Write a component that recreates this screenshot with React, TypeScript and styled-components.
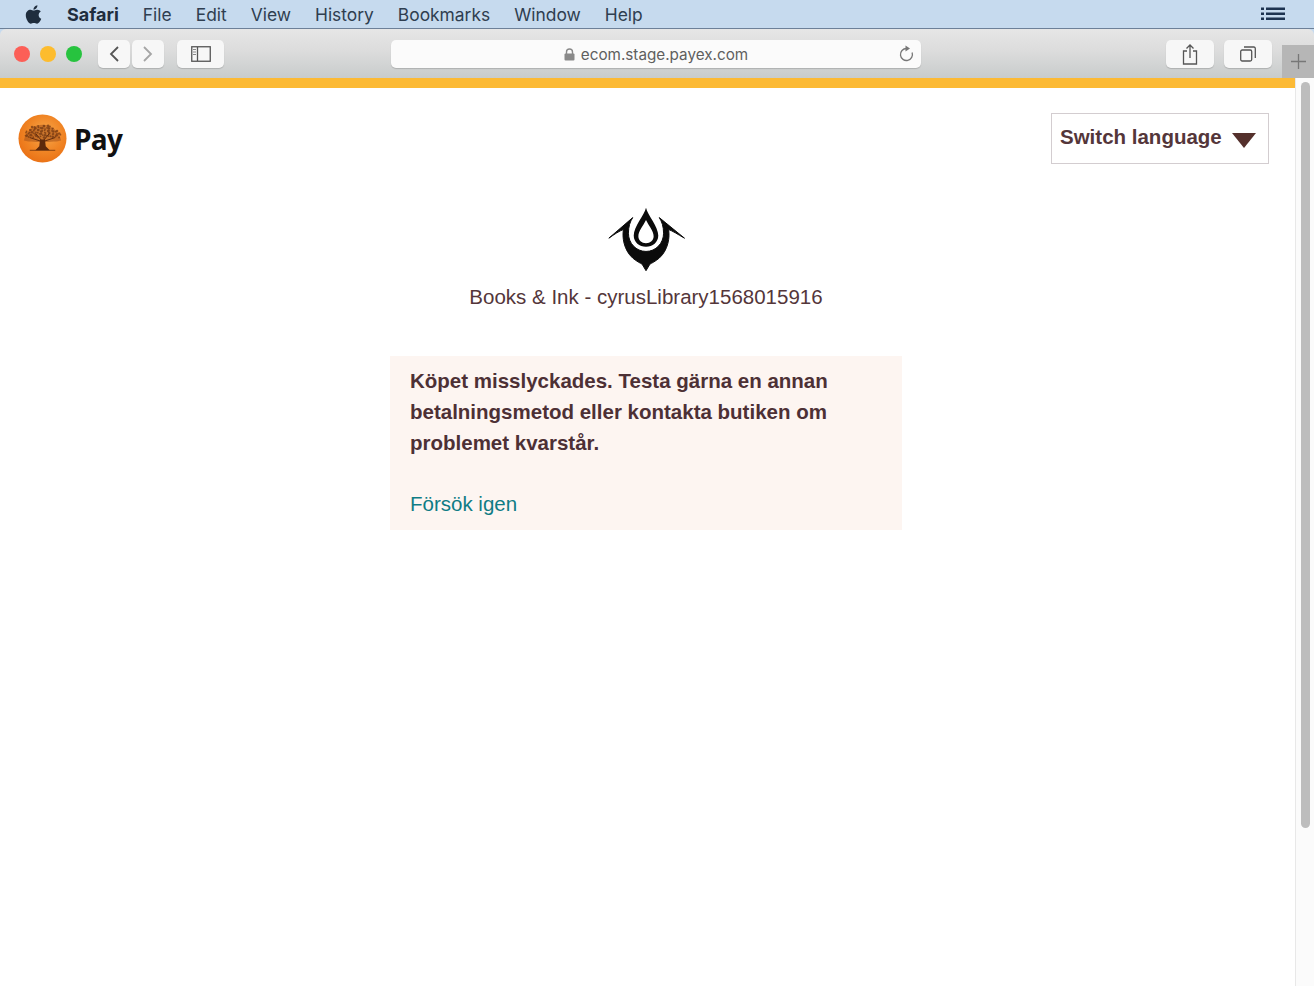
import * as React from 'react';
import styled, { createGlobalStyle } from 'styled-components';
import { FaApple } from 'react-icons/fa';

const GlobalStyle = createGlobalStyle`
  html, body {
    margin: 0;
    padding: 0;
    height: 100%;
    overflow: hidden;
    background: #fff;
  }
  #root {
    height: 100%;
  }
`;

const Screen = styled.div`
  display: flex;
  flex-direction: column;
  width: 1314px;
  height: 986px;
  background: #c6daee;
  overflow: hidden;
`;

const MenuBar = styled.div`
  display: flex;
  align-items: center;
  flex: 0 0 28px;
  padding: 0 29px 0 23px;
  font-family: Inter, "Liberation Sans", sans-serif;
  color: #2b3a4c;
  border-bottom: 1px solid #6d8098;
`;

const AppleMark = styled.span`
  display: flex;
  width: 21px;
  margin-right: 23px;
  font-size: 21px;
  color: #1f2d3d;
`;

const MenuItem = styled.span<{ $bold?: boolean }>`
  margin-right: 24px;
  font-size: ${(p) => (p.$bold ? '18px' : '17.4px')};
  font-weight: ${(p) => (p.$bold ? 700 : 400)};
  color: ${(p) => (p.$bold ? '#1f2d3d' : '#2f3e50')};
`;

const MenuEnd = styled.span`
  display: flex;
  margin-left: auto;
`;

const Toolbar = styled.div`
  display: flex;
  align-items: flex-start;
  flex: 0 0 49px;
  padding-left: 14px;
  background: linear-gradient(#e6e6e6, #dcdcdc 45%, #c8cccc);
  border-radius: 6px 6px 0 0;
`;

const Lights = styled.div`
  display: flex;
  gap: 10px;
  margin-top: 17px;
`;

const Light = styled.span<{ $color: string }>`
  width: 16px;
  height: 16px;
  border-radius: 50%;
  background: ${(p) => p.$color};
`;

const ToolButton = styled.div<{ $width: number; $left: number }>`
  display: flex;
  align-items: center;
  justify-content: center;
  width: ${(p) => p.$width}px;
  height: 28px;
  margin: 11px 0 0 ${(p) => p.$left}px;
  background: #f7f7f7;
  border-radius: 5px;
  box-shadow: 0 1px 1px rgba(0, 0, 0, 0.16);
`;

const UrlBar = styled.div`
  position: relative;
  display: flex;
  align-items: center;
  justify-content: center;
  gap: 6px;
  width: 530px;
  height: 28px;
  margin: 11px 0 0 167px;
  background: #fbfbfb;
  border-radius: 5px;
  box-shadow: 0 1px 1px rgba(0, 0, 0, 0.16);
  font-family: Inter, "Liberation Sans", sans-serif;
  font-size: 15.25px;
  color: #5f5f5f;
`;

const Reload = styled.svg`
  position: absolute;
  right: 6px;
  top: 5px;
`;

const NewTab = styled.div`
  display: flex;
  align-items: center;
  justify-content: center;
  align-self: flex-end;
  width: 32px;
  height: 33px;
  margin-left: 10px;
  background: #b6b6b6;
`;

const Body = styled.div`
  display: flex;
  flex: 1;
  min-height: 0;
  background: #fff;
`;

const Page = styled.main`
  flex: 1;
  display: flex;
  flex-direction: column;
  font-family: "Liberation Sans", Arial, sans-serif;
  color: #54363a;
`;

const AccentBar = styled.div`
  flex: 0 0 10px;
  background: #fcba35;
`;

const Header = styled.header`
  display: flex;
  justify-content: space-between;
  align-items: flex-start;
  padding: 25px 26px 0 18px;
`;

const Brand = styled.div`
  display: flex;
  align-items: center;
  gap: 7px;
  height: 49px;
  margin-top: 1px;
`;

const BrandName = styled.span`
  font-family: "Open Sans", "Noto Sans", sans-serif;
  font-size: 28px;
  font-weight: 700;
  color: #111;
  letter-spacing: -0.8px;
`;

const LanguageButton = styled.button`
  display: flex;
  align-items: center;
  justify-content: space-between;
  box-sizing: border-box;
  width: 218px;
  height: 51px;
  padding: 0 12px 4px 8px;
  background: #fff;
  border: 1px solid #d3cdd0;
  font-family: "Liberation Sans", Arial, sans-serif;
  font-size: 20.5px;
  font-weight: 700;
  color: #54363a;
`;

const Caret = styled.span`
  width: 0;
  height: 0;
  margin-top: 8px;
  border-left: 12px solid transparent;
  border-right: 12px solid transparent;
  border-top: 15px solid #54302c;
`;

const Content = styled.div`
  display: flex;
  flex-direction: column;
  align-items: center;
  padding-right: 3px;
`;

const StoreLogo = styled.svg`
  margin-top: 41px;
`;

const StoreName = styled.div`
  margin-top: 11px;
  font-size: 20.5px;
  line-height: 26px;
`;

const Alert = styled.section`
  box-sizing: border-box;
  width: 512px;
  height: 174px;
  margin-top: 46px;
  padding: 9px 20px;
  background: #fdf5f1;
`;

const AlertText = styled.p`
  margin: 0 0 30px;
  font-size: 20.5px;
  font-weight: 700;
  line-height: 31px;
  color: #4d3035;
`;

const RetryLink = styled.a`
  font-size: 20.5px;
  line-height: 31px;
  color: #0f7c85;
`;

const ScrollTrack = styled.div`
  flex: 0 0 19px;
  box-sizing: border-box;
  padding: 4px 4px 0 5px;
  background: #fbfbfb;
  border-left: 1px solid #e8e8e8;
`;

const ScrollThumb = styled.div`
  height: 746px;
  background: #bdbdbd;
  border-radius: 5px;
`;

// leaves of the tree, scattered over the dome of the canopy
const leaves = Array.from({ length: 70 }, (_, i) => {
  const angle = i * 2.399;
  const radius = Math.sqrt((i + 0.5) / 70);
  return {
    x: 25 + Math.cos(angle) * radius * 19,
    y: 24 + Math.abs(Math.sin(angle)) * radius * -13,
  };
});

const SwedbankLogo = () => (
  <svg width="49" height="49" viewBox="0 0 50 50" aria-hidden="true">
    <defs>
      <radialGradient id="sun" cx="55%" cy="40%" r="65%">
        <stop offset="0%" stopColor="#f8a94c" />
        <stop offset="60%" stopColor="#f08424" />
        <stop offset="100%" stopColor="#e96f14" />
      </radialGradient>
    </defs>
    <circle cx="25" cy="25" r="24.5" fill="url(#sun)" />
    <path d="M6 27C8 17 16 11 25 11s17 6 19 16c-6 2-32 2-38 0Z" fill="#a9551a" opacity="0.6" />
    <g fill="#6e3410" opacity="0.7">
      {leaves.map((l, i) => (
        <circle key={i} cx={l.x} cy={l.y} r={i % 3 === 0 ? 1.300 : 0.900} />
      ))}
    </g>
    <g fill="#5e2a0c">
      <path d="M22.500 26h5l.8 7 4 4H17.700l4-4z" />
      <path d="M24 28 12 24M26 28l12-4M24 27l-6-7M26 27l6-7" stroke="#5e2a0c" strokeWidth="1" />
      <path d="M12 36.500h26v1.200H12z" opacity="0.6" />
    </g>
  </svg>
);

const App = () => {
  const menu = ['File', 'Edit', 'View', 'History', 'Bookmarks', 'Window', 'Help'];

  return (
    <Screen>
      <GlobalStyle />
      <MenuBar>
        <AppleMark>
          <FaApple />
        </AppleMark>
        <MenuItem $bold>Safari</MenuItem>
        {menu.map((m) => (
          <MenuItem key={m}>{m}</MenuItem>
        ))}
        <MenuEnd>
          <svg width="24" height="14" viewBox="0 0 24 14" aria-hidden="true">
            <g fill="#1d3350">
              <rect x="0" y="0.5" width="3" height="2.500" />
              <rect x="0" y="5.500" width="3" height="2.500" />
              <rect x="0" y="10.500" width="3" height="2.500" />
              <rect x="5" y="0.500" width="19" height="2.500" />
              <rect x="5" y="5.500" width="19" height="2.500" />
              <rect x="5" y="10.500" width="19" height="2.500" />
            </g>
          </svg>
        </MenuEnd>
      </MenuBar>

      <Toolbar>
        <Lights>
          <Light $color="#fc5f57" />
          <Light $color="#fdbc2e" />
          <Light $color="#27c33f" />
        </Lights>
        <ToolButton $width={32} $left={16}>
          <svg width="12" height="18" viewBox="0 0 12 18" aria-hidden="true">
            <path d="M10 2 3 9l7 7" fill="none" stroke="#555" strokeWidth="1.8" />
          </svg>
        </ToolButton>
        <ToolButton $width={32} $left={2}>
          <svg width="12" height="18" viewBox="0 0 12 18" aria-hidden="true">
            <path d="m2 2 7 7-7 7" fill="none" stroke="#a5a5a5" strokeWidth="1.8" />
          </svg>
        </ToolButton>
        <ToolButton $width={47} $left={13}>
          <svg width="20" height="16" viewBox="0 0 20 16" aria-hidden="true">
            <rect x="0.75" y="0.75" width="18.5" height="14.5" fill="none" stroke="#555" strokeWidth="1.3" />
            <path d="M6.5 1v14" stroke="#555" strokeWidth="1.3" />
            <path d="M2 3.5h3M2 6h3M2 8.5h3" stroke="#888" strokeWidth="1" />
          </svg>
        </ToolButton>
        <UrlBar>
          <svg width="11" height="13" viewBox="0 0 11 13" aria-hidden="true">
            <path d="M2.5 6V4a3 3 0 0 1 6 0v2" fill="none" stroke="#8a8a8a" strokeWidth="1.4" />
            <rect x="0.5" y="5.5" width="10" height="7" rx="1" fill="#8a8a8a" />
          </svg>
          ecom.stage.payex.com
          <Reload width="18" height="18" viewBox="0 0 18 18" aria-hidden="true">
            <path d="M9.5 3.5a6 6 0 1 0 5.6 4" fill="none" stroke="#777" strokeWidth="1.3" />
            <path d="M8.5 0.5 13 3.5 8.5 6.5z" fill="#777" />
          </Reload>
        </UrlBar>
        <ToolButton $width={48} $left={245}>
          <svg width="16" height="21" viewBox="0 0 16 21" aria-hidden="true">
            <path d="M5 7H1.500v13h13V7H11M8 14V1.500M4.500 4.500 8 1l3.500 3.500" fill="none" stroke="#555" strokeWidth="1.3" />
          </svg>
        </ToolButton>
        <ToolButton $width={48} $left={10}>
          <svg width="16" height="16" viewBox="0 0 16 16" aria-hidden="true">
            <rect x="0.7" y="4" width="11" height="11" rx="1.5" fill="none" stroke="#555" strokeWidth="1.3" />
            <path d="M4 1h10a1.500 1.500 0 0 1 1.300 1.500V12" fill="none" stroke="#555" strokeWidth="1.3" />
          </svg>
        </ToolButton>
        <NewTab>
          <svg width="15" height="15" viewBox="0 0 15 15" aria-hidden="true">
            <path d="M7.500 0v15M0 7.500h15" stroke="#777" strokeWidth="1.300" />
          </svg>
        </NewTab>
      </Toolbar>

      <Body>
        <Page>
          <AccentBar />
          <Header>
            <Brand>
              <SwedbankLogo />
              <BrandName>Pay</BrandName>
            </Brand>
            <LanguageButton>
              Switch language
              <Caret />
            </LanguageButton>
          </Header>

          <Content>
            <StoreLogo width="80" height="68" viewBox="80 30 240 205" aria-hidden="true">
              <path
                fill="#0b0b0b"
                fillRule="evenodd"
                d="M200 38C205 60 237 95 237 122C237 142 220 156 200 156C180 156 163 142 163 122C163 95 195 60 200 38ZM200 75C192 92 177 108 177 124C177 136 187 145 200 145C213 145 223 136 223 124C223 108 208 92 200 75Z"
              />
              <path
                fill="#0b0b0b"
                stroke="#0b0b0b"
                strokeWidth="3"
                strokeLinejoin="round"
                d="M88 130L160 68C152 80 147 95 147 115C147 145 170 170 200 170C230 170 253 145 253 115C253 95 248 80 240 68L316 130C295 118 280 108 268 104C272 125 268 165 240 190C228 200 218 205 212 208L200 228L188 208C182 205 172 200 160 190C132 165 128 125 132 104C120 108 105 118 88 130Z"
              />
            </StoreLogo>
            <StoreName>Books &amp; Ink - cyrusLibrary1568015916</StoreName>

            <Alert>
              <AlertText>
                Köpet misslyckades. Testa gärna en annan betalningsmetod eller kontakta butiken om problemet kvarstår.
              </AlertText>
              <RetryLink>Försök igen</RetryLink>
            </Alert>
          </Content>
        </Page>
        <ScrollTrack>
          <ScrollThumb />
        </ScrollTrack>
      </Body>
    </Screen>
  );
};

export default App;
